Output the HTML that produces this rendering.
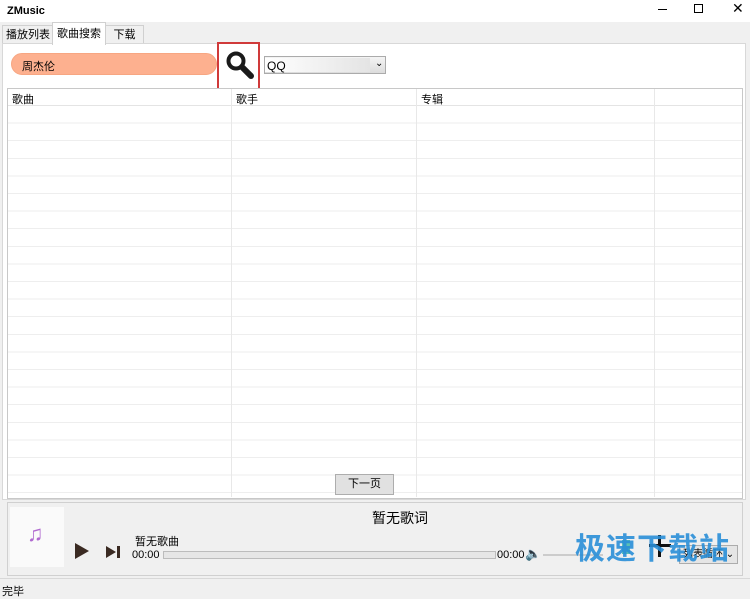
<html><head><style>
body{margin:0;width:750px;height:597px;background:#f0f0f0;font-family:"Liberation Sans","Noto Sans CJK SC",sans-serif;font-size:11px;color:#000;position:relative;overflow:hidden}
.a{position:absolute}
</style></head><body>
<div class="a" style="left:0;top:0;width:750px;height:22px;background:#fff"></div>
<div class="a" style="left:7px;top:5px;font-weight:bold;font-size:11px">ZMusic</div>
<div class="a" style="left:658px;top:9px;width:9px;height:1px;background:#000"></div>
<div class="a" style="left:694px;top:4px;width:7px;height:7px;border:1px solid #000"></div>
<div class="a" style="left:732px;top:0px;font-size:14px">✕</div>
<div class="a" style="left:2px;top:25px;width:50px;height:17px;border:1px solid #d0d0d0;border-bottom:none;background:#f0f0f0;text-align:center;line-height:18px">播放列表</div>
<div class="a" style="left:52px;top:22px;width:52px;height:22px;border:1px solid #d0d0d0;border-bottom:none;background:#fff;text-align:center;line-height:22px;z-index:2">歌曲搜索</div>
<div class="a" style="left:105px;top:25px;width:37px;height:17px;border:1px solid #d0d0d0;border-bottom:none;background:#f0f0f0;text-align:center;line-height:18px">下载</div>
<div class="a" style="left:2px;top:43px;width:742px;height:455px;border:1px solid #d8d8d8;background:#fff"></div>
<div class="a" style="left:11px;top:53px;width:206px;height:22px;border-radius:11px;background:#fdb08f;border:1px solid #f7a682;box-sizing:border-box"></div>
<div class="a" style="left:22px;top:58px;font-size:11px">周杰伦</div>
<div class="a" style="left:217px;top:42px;width:43px;height:51px;border:2px solid #d03a3a;box-sizing:border-box;background:#fff"></div>
<svg class="a" style="left:224px;top:50px" width="32" height="32" viewBox="0 0 32 32"><circle cx="12" cy="11" r="7.5" fill="none" stroke="#1a1a1a" stroke-width="4"/><line x1="18" y1="17" x2="27" y2="26" stroke="#1a1a1a" stroke-width="6" stroke-linecap="round"/></svg>
<div class="a" style="left:264px;top:56px;width:122px;height:18px;border:1px solid #ababab;box-sizing:border-box;background:linear-gradient(#f4f4f4,#dcdcdc)"></div>
<div class="a" style="left:265px;top:58px;width:105px;height:14px;background:linear-gradient(90deg,#fff,#e4e4e4)"></div>
<div class="a" style="left:267px;top:59px;font-size:12px">QQ</div>
<div class="a" style="left:375px;top:58px;font-size:10px">⌄</div>
<div class="a" style="left:7px;top:88px;width:734px;height:409px;border:1px solid #c8c8c8;background:#fff;background-image:repeating-linear-gradient(#fff 0,#fff 16.6px,#eeeeee 16.6px,#eeeeee 17.6px);background-position:0 17px"></div>
<div class="a" style="left:8px;top:89px;width:734px;height:16px;background:#fff;border-bottom:1px solid #e4e4e4"></div>
<div class="a" style="left:231px;top:89px;width:1px;height:408px;background:#e8e8e8"></div>
<div class="a" style="left:416px;top:89px;width:1px;height:408px;background:#e8e8e8"></div>
<div class="a" style="left:654px;top:89px;width:1px;height:408px;background:#e8e8e8"></div>
<div class="a" style="left:12px;top:91px">歌曲</div>
<div class="a" style="left:236px;top:91px">歌手</div>
<div class="a" style="left:421px;top:91px">专辑</div>
<div class="a" style="left:335px;top:474px;width:59px;height:21px;border:1px solid #adadad;box-sizing:border-box;background:#e1e1e1;text-align:center;line-height:19px">下一页</div>
<div class="a" style="left:7px;top:502px;width:734px;height:72px;border:1px solid #d0d0d0;background:#f0f0f0"></div>
<div class="a" style="left:10px;top:507px;width:54px;height:60px;background:#fafafa"></div>
<div class="a" style="left:27px;top:521px;font-size:22px;color:#b06ad0">♫</div>
<div class="a" style="left:372px;top:508px;font-size:14px">暂无歌词</div>
<div class="a" style="left:135px;top:533px">暂无歌曲</div>
<div class="a" style="left:75px;top:543px;width:0;height:0;border-left:14px solid #3a2a22;border-top:8px solid transparent;border-bottom:8px solid transparent"></div>
<div class="a" style="left:106px;top:546px;width:0;height:0;border-left:10px solid #3a2a22;border-top:6px solid transparent;border-bottom:6px solid transparent"></div>
<div class="a" style="left:117px;top:546px;width:3px;height:12px;background:#3a2a22"></div>
<div class="a" style="left:132px;top:549px">00:00</div>
<div class="a" style="left:163px;top:551px;width:331px;height:6px;border:1px solid #bcbcbc;background:#e6e6e6"></div>
<div class="a" style="left:497px;top:549px">00:00</div>
<div class="a" style="left:525px;top:546px;font-size:13px">🔈</div>
<div class="a" style="left:543px;top:554px;width:60px;height:2px;background:#ccc"></div>
<div class="a" style="left:622px;top:540px;width:8px;height:14px;background:#5bbfb5"></div>
<div class="a" style="left:649px;top:544px;width:22px;height:3px;background:#111"></div>
<div class="a" style="left:658px;top:535px;width:3px;height:22px;background:#111"></div>
<div class="a" style="left:679px;top:545px;width:59px;height:19px;border:1px solid #acacac;box-sizing:border-box;background:#e5e5e5;font-size:10px;line-height:17px;padding-left:3px">列表循环 ⌄</div>
<div class="a" style="left:575px;top:524px;font-size:30px;color:#2a8fd8;font-weight:bold;letter-spacing:1px;opacity:.9">极速下载站</div>
<div class="a" style="left:0;top:578px;width:750px;height:1px;background:#d8d8d8"></div>
<div class="a" style="left:2px;top:583px;font-size:11px">完毕</div>
</body></html>
